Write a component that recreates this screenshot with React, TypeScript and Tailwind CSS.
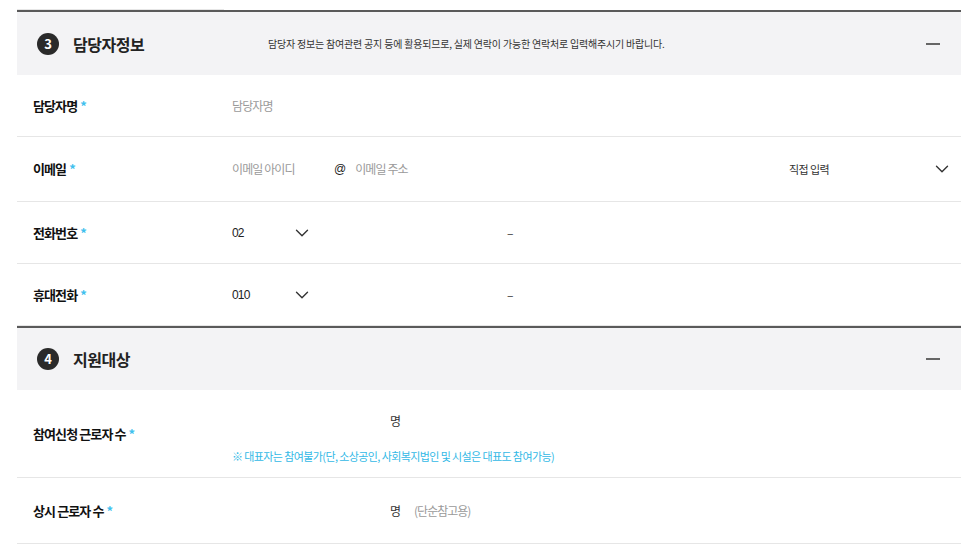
import { ChevronDown } from "lucide-react";
import type { ReactNode } from "react";

function Required() {
    return <span className="ml-[3px] text-[#3fc1ee]">*</span>;
}

function SectionHeader({ no, title, desc, height }: { no: number; title: string; desc?: string; height: string }) {
    return (
        <div className={`flex ${height} items-center border-t-2 border-[#5a5a5a] bg-[#f3f3f5] pl-[20px] pr-[21px]`}>
            <span className="flex h-[22px] w-[22px] items-center justify-center rounded-full bg-[#2a2a2a] text-[13px] font-bold text-white">
                {no}
            </span>
            <h3 className="ml-[14px] w-[195px] text-[16px] font-bold tracking-[-0.5px] text-[#222]">{title}</h3>
            {desc && <p className="text-[10px] tracking-[-0.2px] text-[#333]">{desc}</p>}
            <span className="ml-auto h-[2px] w-[14px] bg-[#666]" />
        </div>
    );
}

const labelCls = "flex w-[207px] items-center border-b border-[#e6e6e6] pl-[16px] text-[13px] font-bold tracking-[-0.9px] text-[#111]";

function Row({ label, height, children }: { label: string; height: string; children: ReactNode }) {
    return (
        <div className={`flex ${height}`}>
            <div className={labelCls}>
                {label}
                <Required />
            </div>
            <div className="flex flex-1 items-center border-b border-[#e6e6e6] pl-[8px] text-[12px] text-[#333]">
                {children}
            </div>
        </div>
    );
}

const inputCls = "bg-transparent outline-none text-[12px] tracking-[-0.9px] text-[#333] placeholder:text-[#9a9a9a]";

function PhoneSelect({ value }: { value: string }) {
    return (
        <div className="-ml-[8px] flex w-[96px] items-center justify-between pl-[8px] pr-[7px]">
            <span className="font-['Liberation_Sans',sans-serif] text-[12px] tracking-[-0.8px] text-[#222]">{value}</span>
            <ChevronDown size={22} strokeWidth={1.5} className="text-[#333]" />
        </div>
    );
}

export default function App() {
    return (
        <div className="min-h-[553px] w-[978px] bg-white px-[17px] font-['Noto_Sans_CJK_KR','Noto_Sans',sans-serif]">
            {/* previous row edge */}
            <div className="flex h-[10px]">
                <div className="w-[207px] border-b border-[#e6e6e6]" />
            </div>

            <section>
                <SectionHeader
                    no={3}
                    height="h-[65px]"
                    title="담당자정보"
                    desc="담당자 정보는 참여관련 공지 등에 활용되므로, 실제 연락이 가능한 연락처로 입력해주시기 바랍니다."
                />

                <Row label="담당자명" height="h-[62px]">
                    <input className={`${inputCls} w-[300px]`} placeholder="담당자명" />
                </Row>

                <Row label="이메일" height="h-[65px]">
                    <input className={`${inputCls} w-[95px]`} placeholder="이메일 아이디" />
                    <span className="ml-[7px] font-['Liberation_Sans',sans-serif] text-[12px] text-[#222]">@</span>
                    <input className={`${inputCls} ml-[9px] flex-1`} placeholder="이메일 주소" />
                    <div className="flex w-[181px] items-center justify-between pl-[9px] pr-[8px]">
                        <span className="text-[11px] tracking-[-0.6px] text-[#333]">직접 입력</span>
                        <ChevronDown size={22} strokeWidth={1.5} className="text-[#333]" />
                    </div>
                </Row>

                <Row label="전화번호" height="h-[62px]">
                    <PhoneSelect value="02" />
                    <div className="w-[187px]" />
                    <span className="text-[12px] text-[#333]">–</span>
                </Row>

                <Row label="휴대전화" height="h-[62px]">
                    <PhoneSelect value="010" />
                    <div className="w-[187px]" />
                    <span className="text-[12px] text-[#333]">–</span>
                </Row>
            </section>

            <section>
                <SectionHeader no={4} height="h-[64px]" title="지원대상" />

                <div className="flex h-[88px]">
                    <div className={labelCls}>
                        참여신청 근로자 수
                        <Required />
                    </div>
                    <div className="flex flex-1 flex-col border-b border-[#e6e6e6] pl-[8px] pt-[21px]">
                        <div className="flex h-[20px] items-center">
                            <input className={`${inputCls} w-[150px]`} />
                            <span className="ml-[8px] text-[12px] text-[#333]">명</span>
                        </div>
                        <p className="mt-[17px] text-[11px] tracking-[-0.6px] text-[#33b9e6]">
                            ※ 대표자는 참여불가(단, 소상공인, 사회복지법인 및 시설은 대표도 참여가능)
                        </p>
                    </div>
                </div>

                <Row label="상시 근로자 수" height="h-[66px]">
                    <input className={`${inputCls} w-[150px]`} />
                    <span className="ml-[8px] text-[12px] text-[#333]">명</span>
                    <span className="ml-[13px] text-[12px] tracking-[-1px] text-[#9a9a9a]">(단순참고용)</span>
                </Row>
            </section>
        </div>
    );
}
